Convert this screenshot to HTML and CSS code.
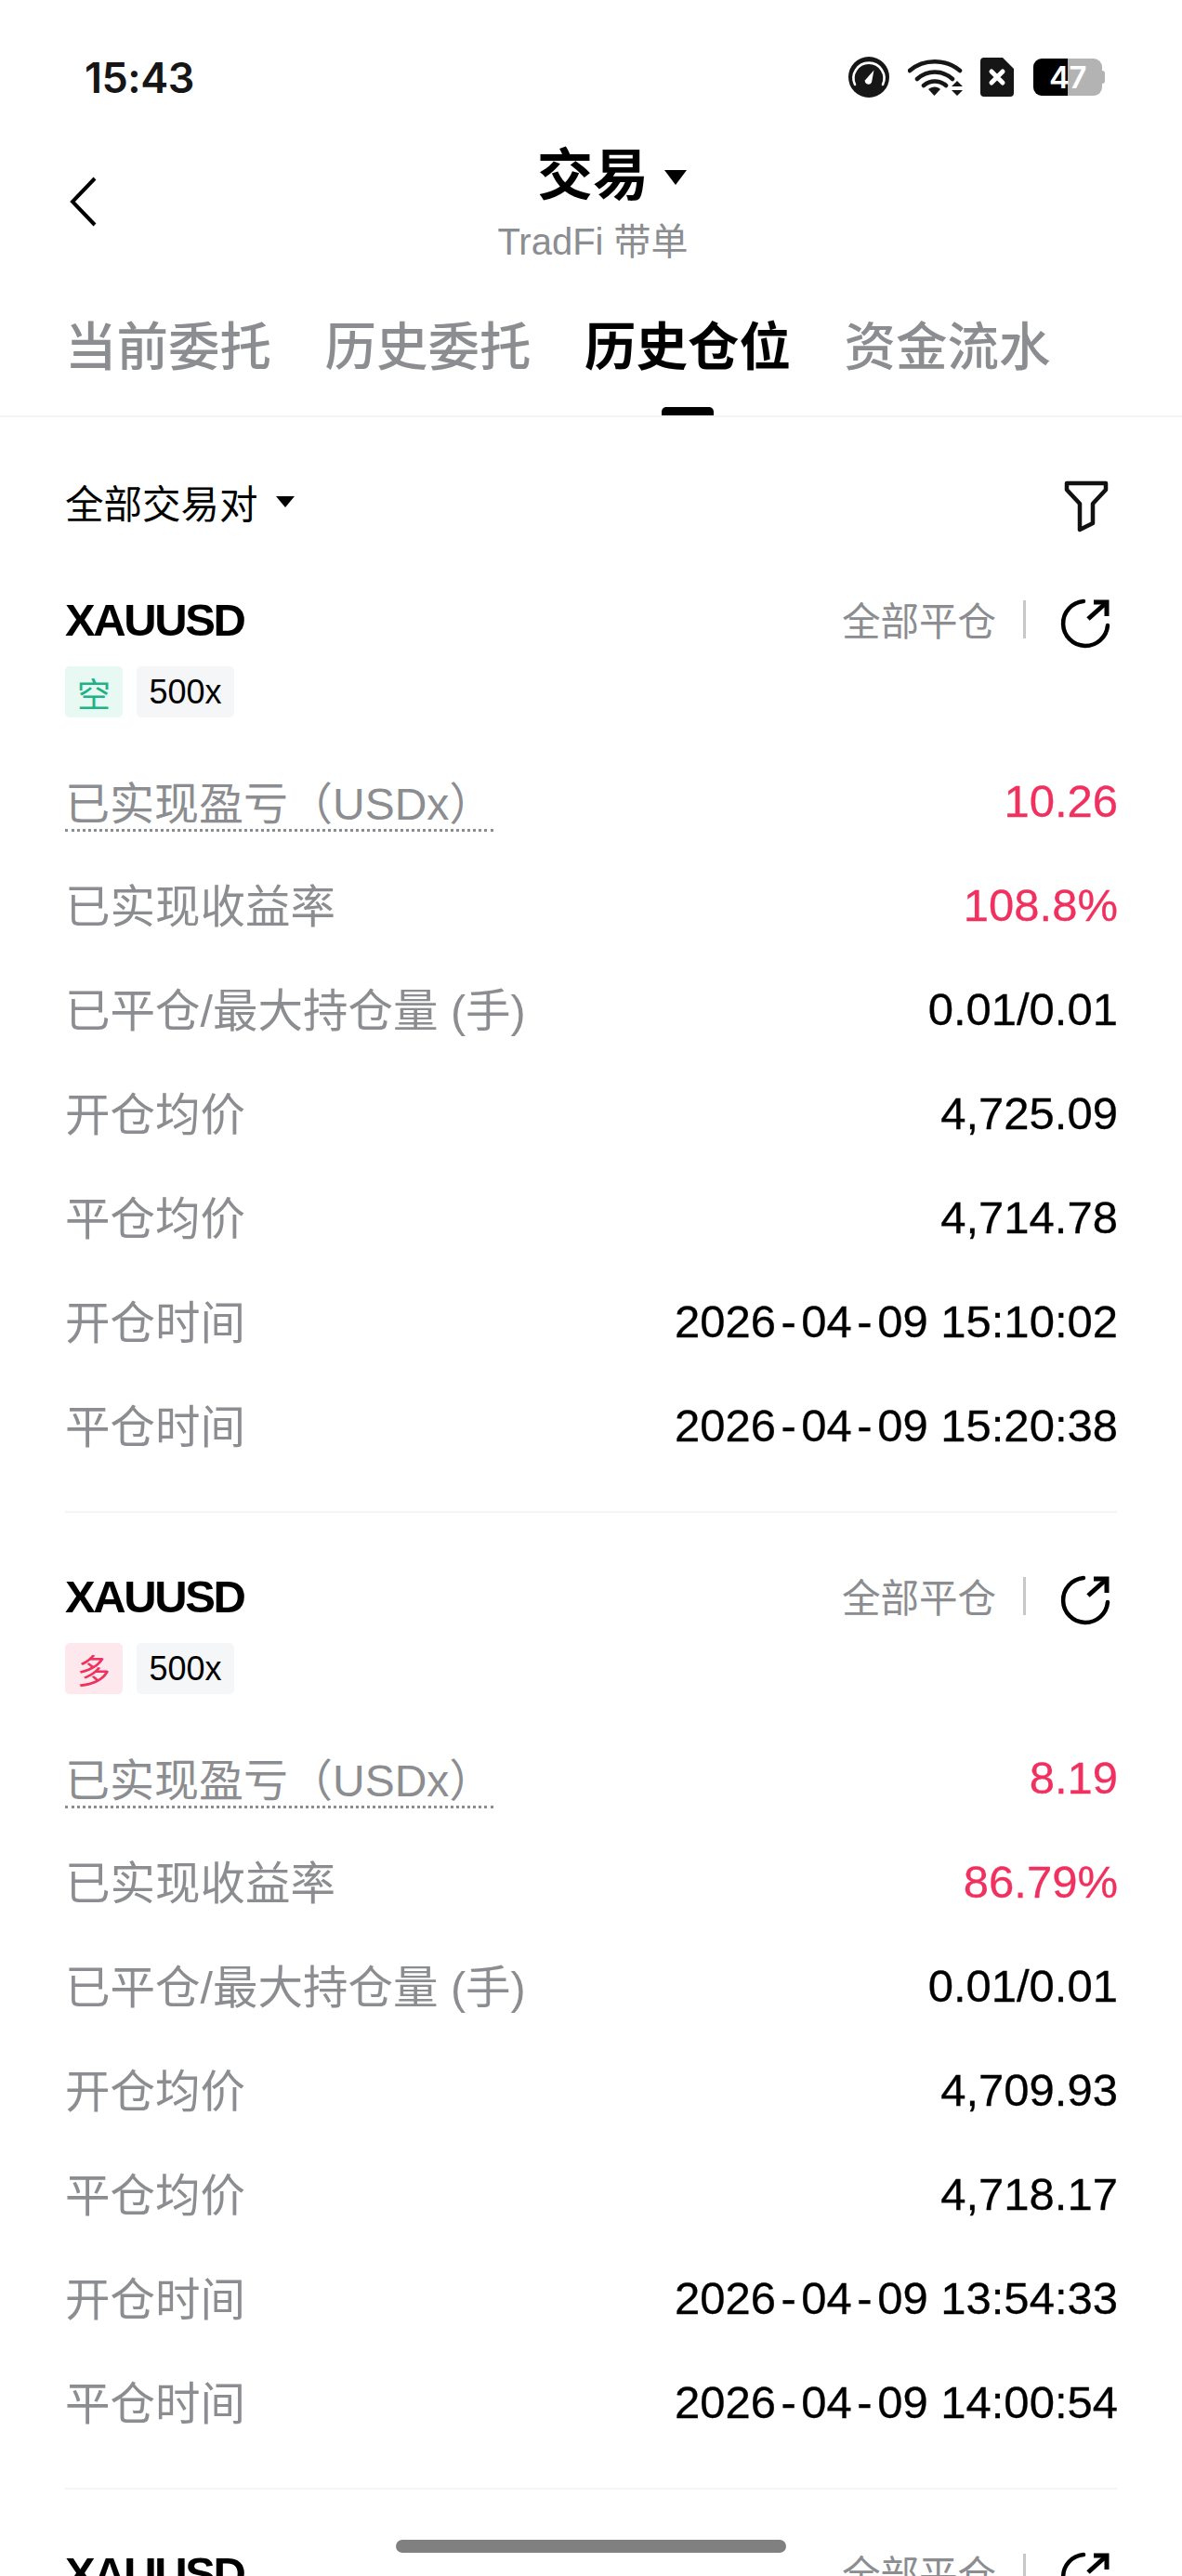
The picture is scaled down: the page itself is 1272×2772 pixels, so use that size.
FILE: index.html
```html
<!DOCTYPE html>
<html lang="zh-CN">
<head>
    <meta charset="UTF-8">
    <meta name="viewport" content="width=device-width, initial-scale=1.0">
    <title>交易</title>
    <link rel="stylesheet" href="styles.css">
</head>
<body>
    <div class="status">
        <span class="time">15:43</span>
        <div class="status-icons">
            <svg class="ic-gauge" width="44" height="44" viewBox="0 0 44 44">
                <circle cx="22" cy="22" r="22" fill="#161616"/>
                <path d="M7 30A16.5 16.5 0 1 1 37 30" fill="none" stroke="#fff" stroke-width="2.6" stroke-linecap="round"/>
                <path d="M27.500 14.500L25 27.500A3.800 3.800 0 0 1 17.800 25.500Z" fill="#fff"/>
            </svg>
            <svg class="ic-wifi" width="60" height="42" viewBox="0 0 60 42">
                <path d="M2 14C17 1 41 1 56 14" fill="none" stroke="#161616" stroke-width="4.500" stroke-linecap="round"/>
                <path d="M10 23C21 13 37 13 48 23" fill="none" stroke="#161616" stroke-width="4.500" stroke-linecap="round"/>
                <path d="M17 30C24 24 34 24 41 30" fill="none" stroke="#161616" stroke-width="4.500" stroke-linecap="round"/>
                <path d="M22 34C26 30.500 32 30.500 35 34L28.500 41Z" fill="#161616"/>
                <path d="M47 31L53 25L59 31ZM47 35H59L53 41Z" fill="#161616"/>
            </svg>
            <svg class="ic-sim" width="36" height="42" viewBox="0 0 36 42">
                <path d="M4 0H24L36 12V38A4 4 0 0 1 32 42H4A4 4 0 0 1 0 38V4A4 4 0 0 1 4 0Z" fill="#161616"/>
                <path d="M12 15L24 27M24 15L12 27" stroke="#fff" stroke-width="5" stroke-linecap="round"/>
            </svg>
            <div class="battery"><span>47</span></div>
        </div>
    </div>

    <header class="head">
        <svg class="back" width="30" height="54" viewBox="0 0 30 54">
            <path d="M28 2L4 27L28 52" fill="none" stroke="#000" stroke-width="4"/>
        </svg>
        <div class="head-title">
            <div class="title">交易<i class="caret caret-big"></i></div>
            <div class="subtitle">TradFi 带单</div>
        </div>
    </header>

    <nav class="tabs">
        <a class="tab">当前委托</a>
        <a class="tab">历史委托</a>
        <a class="tab on">历史仓位</a>
        <a class="tab">资金流水</a>
    </nav>

    <div class="filter">
        <span class="filter-name">全部交易对<i class="caret"></i></span>
        <svg class="filter-icon" width="48" height="56" viewBox="0 0 48 56">
            <path d="M3 3H45V10L31 25V46L17 53V25L3 10Z" fill="none" stroke="#111" stroke-width="4.500" stroke-linejoin="round"/>
        </svg>
    </div>

    <section class="card">
        <div class="card-top">
            <span class="symbol">XAUUSD</span>
            <div class="actions">
                <span class="close-all">全部平仓</span>
                <i class="sep"></i>
                <svg class="share" width="54" height="54" viewBox="0 0 54 54">
                    <path d="M25 3A24 24 0 1 0 51 29" fill="none" stroke="#000" stroke-width="4.500" stroke-linecap="round"/>
                    <path d="M30 22L49 5" stroke="#000" stroke-width="5"/>
                    <path d="M36 4H50V19" fill="none" stroke="#000" stroke-width="5"/>
                </svg>
            </div>
        </div>
        <div class="tags"><span class="tag short">空</span><span class="tag lev">500x</span></div>
        <div class="rows">
            <div class="row"><span class="label dotted">已实现盈亏（USDx）</span><span class="val red">10.26</span></div>
            <div class="row"><span class="label">已实现收益率</span><span class="val red">108.8%</span></div>
            <div class="row"><span class="label">已平仓/最大持仓量 (手)</span><span class="val">0.01/0.01</span></div>
            <div class="row"><span class="label">开仓均价</span><span class="val">4,725.09</span></div>
            <div class="row"><span class="label">平仓均价</span><span class="val">4,714.78</span></div>
            <div class="row"><span class="label">开仓时间</span><span class="val">2026<span class="hy">-</span>04<span class="hy">-</span>09 15:10:02</span></div>
            <div class="row"><span class="label">平仓时间</span><span class="val">2026<span class="hy">-</span>04<span class="hy">-</span>09 15:20:38</span></div>
        </div>
    </section>

    <section class="card">
        <div class="card-top">
            <span class="symbol">XAUUSD</span>
            <div class="actions">
                <span class="close-all">全部平仓</span>
                <i class="sep"></i>
                <svg class="share" width="54" height="54" viewBox="0 0 54 54">
                    <path d="M25 3A24 24 0 1 0 51 29" fill="none" stroke="#000" stroke-width="4.500" stroke-linecap="round"/>
                    <path d="M30 22L49 5" stroke="#000" stroke-width="5"/>
                    <path d="M36 4H50V19" fill="none" stroke="#000" stroke-width="5"/>
                </svg>
            </div>
        </div>
        <div class="tags"><span class="tag long">多</span><span class="tag lev">500x</span></div>
        <div class="rows">
            <div class="row"><span class="label dotted">已实现盈亏（USDx）</span><span class="val red">8.19</span></div>
            <div class="row"><span class="label">已实现收益率</span><span class="val red">86.79%</span></div>
            <div class="row"><span class="label">已平仓/最大持仓量 (手)</span><span class="val">0.01/0.01</span></div>
            <div class="row"><span class="label">开仓均价</span><span class="val">4,709.93</span></div>
            <div class="row"><span class="label">平仓均价</span><span class="val">4,718.17</span></div>
            <div class="row"><span class="label">开仓时间</span><span class="val">2026<span class="hy">-</span>04<span class="hy">-</span>09 13:54:33</span></div>
            <div class="row"><span class="label">平仓时间</span><span class="val">2026<span class="hy">-</span>04<span class="hy">-</span>09 14:00:54</span></div>
        </div>
    </section>

    <section class="card">
        <div class="card-top">
            <span class="symbol">XAUUSD</span>
            <div class="actions">
                <span class="close-all">全部平仓</span>
                <i class="sep"></i>
                <svg class="share" width="54" height="54" viewBox="0 0 54 54">
                    <path d="M25 3A24 24 0 1 0 51 29" fill="none" stroke="#000" stroke-width="4.500" stroke-linecap="round"/>
                    <path d="M30 22L49 5" stroke="#000" stroke-width="5"/>
                    <path d="M36 4H50V19" fill="none" stroke="#000" stroke-width="5"/>
                </svg>
            </div>
        </div>
    </section>

    <div class="home-bar"></div>
</body>
</html>
```

FILE: styles.css
```css
html,body{margin:0;padding:0;height:2772px;overflow:hidden;background:#fff;}
body{position:relative;width:1272px;font-family:"Liberation Sans","Noto Sans CJK SC",sans-serif;color:#000;}
i{display:block;}

/* status bar */
.status{display:flex;justify-content:space-between;align-items:center;height:46px;padding:60px 83px 24px 91px;font-family:Inter,sans-serif;}
.time{font-size:45px;font-weight:600;color:#161616;letter-spacing:-.5px;}
.status-icons{display:flex;align-items:center;}
.ic-wifi{margin-left:20px;}
.ic-sim{margin-left:18px;}
.battery{position:relative;width:74px;height:40px;margin-left:21px;margin-right:3px;border-radius:9px;background:linear-gradient(90deg,#000 50%,#b3b3b3 50%);display:flex;align-items:center;justify-content:center;}
.battery span{font-size:33px;font-weight:600;color:#fff;letter-spacing:-.5px;}
.battery:after{content:"";position:absolute;right:-3px;top:13px;width:3px;height:14px;border-radius:0 3px 3px 0;background:#b3b3b3;}

/* header */
.head{display:grid;grid-template-columns:1fr auto 1fr;align-items:center;padding:28px 70px 0 74px;}
.back{grid-column:1;margin-top:-6px;}
.head-title{grid-column:2;text-align:center;}
.title{display:flex;align-items:center;justify-content:center;height:64px;font-size:60px;font-weight:700;line-height:64px;}
.subtitle{margin-top:16px;font-size:40px;line-height:44px;color:#8b8d90;}
.caret{width:0;height:0;border-left:10px solid transparent;border-right:10px solid transparent;border-top:12px solid #000;margin-left:19px;}
.caret-big{border-left-width:12px;border-right-width:12px;border-top-width:16px;margin-left:17px;margin-right:-41px;margin-top:2px;}

/* tabs */
.tabs{display:flex;gap:57.500px;padding:57px 70px 0;border-bottom:2px solid #f3f3f3;}
.tab{position:relative;padding-bottom:38px;font-size:55.500px;line-height:70px;font-weight:500;color:#8b8d90;}
.tab.on{color:#000;font-weight:700;}
.tab.on:after{content:"";position:absolute;left:50%;bottom:0;width:56px;height:9px;margin-left:-28px;border-radius:5px 5px 0 0;background:#000;}

/* filter row */
.filter{display:flex;justify-content:space-between;align-items:center;height:76px;padding:53px 79px 0 70px;margin-bottom:-1px;}
.filter-name{display:flex;align-items:center;font-size:41.500px;}
.filter-icon{margin-top:10px;}

/* card */
.card{margin:0 70px;padding:59px 0 36px;border-bottom:2px solid #f5f5f5;}
.card-top{display:flex;justify-content:space-between;align-items:center;height:60px;}
.symbol{font-size:49px;font-weight:700;letter-spacing:-2.400px;margin-top:2px;}
.actions{display:flex;align-items:center;margin-right:7px;}
.close-all{font-size:41.500px;color:#8b8d90;}
.sep{width:3px;height:41px;margin:0 37px 0 29px;background:#c6c8ca;}
.share{margin-top:10px;}
.tags{display:flex;gap:15px;margin-top:21px;}
.tag{display:flex;align-items:center;justify-content:center;height:55px;border-radius:5px;font-size:36px;}
.short{width:62px;background:#e8f8f2;color:#1eb386;}
.long{width:62px;background:#fde8ee;color:#f0305e;}
.lev{width:105px;background:#f5f6f7;}
.rows{margin-top:34px;}
.row{display:flex;justify-content:space-between;align-items:center;height:112px;font-size:49px;}
.label{font-size:48.500px;color:#8b8d90;margin-top:-5px;}
.dotted{font-size:48px;border-bottom:3px dotted #8b8d90;line-height:52px;margin-top:10px;}
.val{color:#000;margin-right:-1px;-webkit-text-stroke:.3px currentColor;}
.hy{margin:0 5.500px;}
.red{color:#f0305e;}

.home-bar{position:absolute;left:426px;top:2733px;width:420px;height:14px;border-radius:7px;background:#808080;}
```
